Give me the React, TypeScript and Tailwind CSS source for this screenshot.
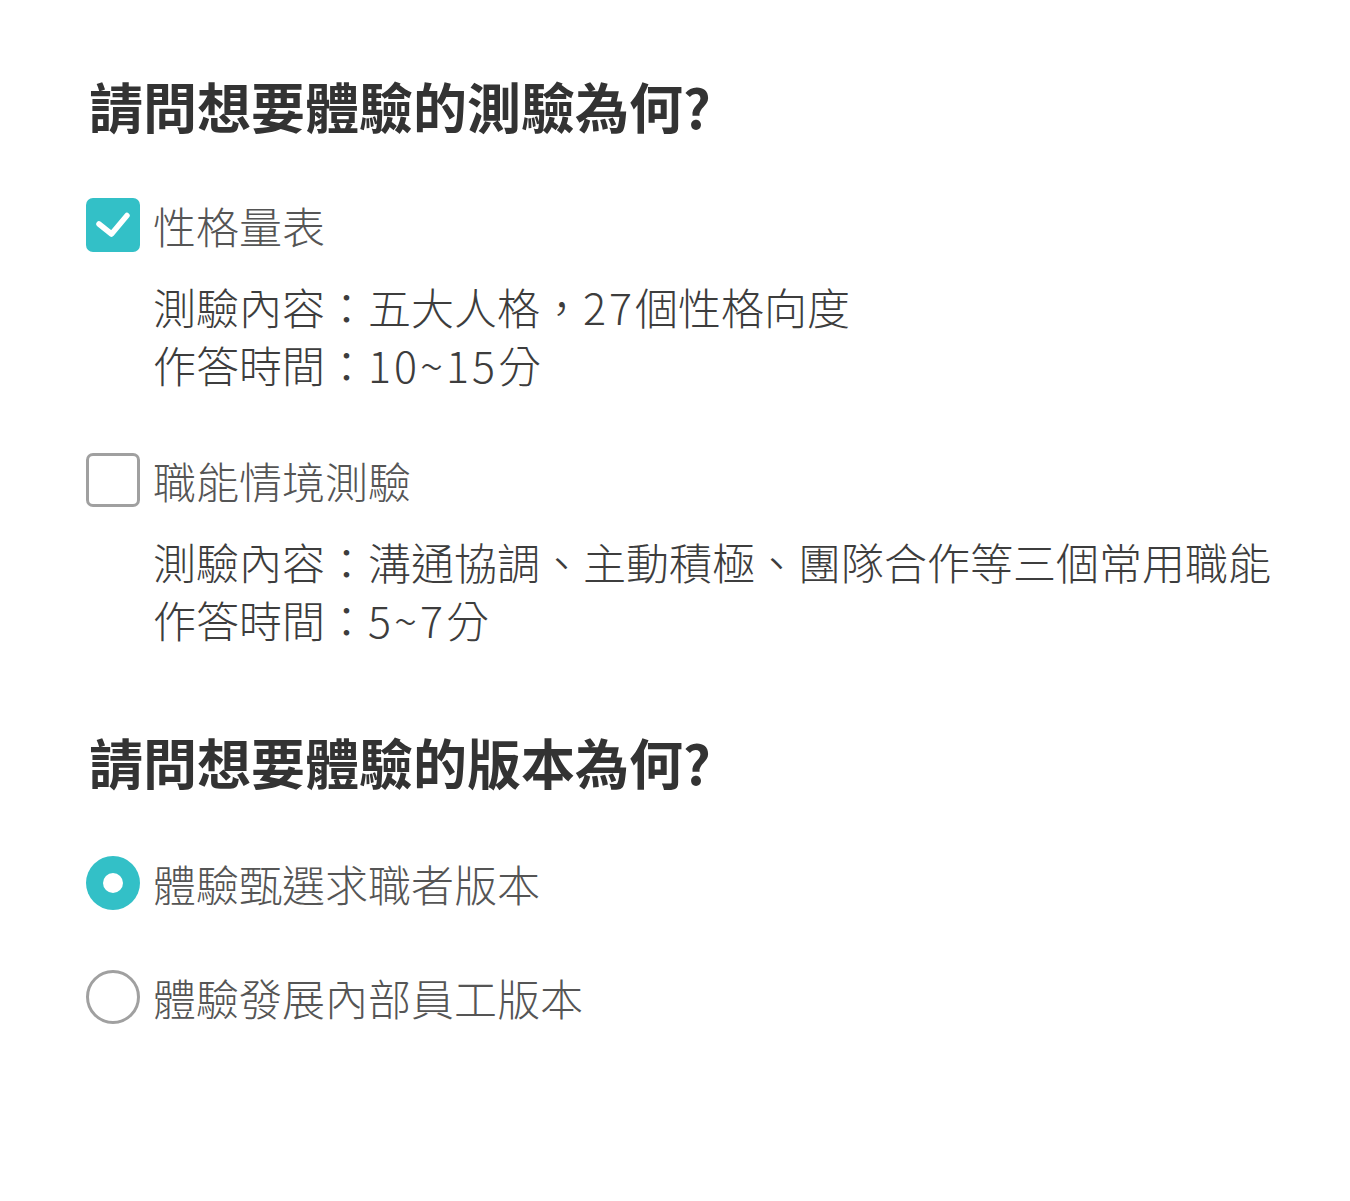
import { useState } from "react";

const FONT = { fontFamily: '"Noto Sans CJK TC", "Noto Sans", sans-serif' };

function CheckBox({ checked }: { checked: boolean }) {
  return checked ? (
    <span className="block h-[54px] w-[54px] shrink-0 rounded-[7px] bg-[#33c0c7]">
      <svg viewBox="0 0 54 54" className="h-[54px] w-[54px]" fill="none">
        <path
          d="M13 26l12.5 10L41 17.5"
          stroke="white"
          strokeWidth="5.5"
          strokeLinecap="round"
          strokeLinejoin="round"
        />
      </svg>
    </span>
  ) : (
    <span className="block h-[54px] w-[54px] shrink-0 rounded-[7px] border-[3px] border-[#a0a0a0] bg-white" />
  );
}

function Radio({ checked }: { checked: boolean }) {
  return checked ? (
    <span className="flex h-[54px] w-[54px] shrink-0 items-center justify-center rounded-full bg-[#33c0c7]">
      <span className="block h-[20px] w-[20px] rounded-full bg-white" />
    </span>
  ) : (
    <span className="block h-[54px] w-[54px] shrink-0 rounded-full border-[3px] border-[#a0a0a0] bg-white" />
  );
}

// digits in the reference sit a little wider than the CJK font's own
const Num = ({ children }: { children: string }) => (
  <span className="tracking-[3px]">{children}</span>
);

const tests = [
  {
    label: "性格量表",
    content: (
      <>
        測驗內容：五大人格，<Num>27</Num>個性格向度
      </>
    ),
    time: (
      <>
        作答時間：<Num>10~15</Num>分
      </>
    ),
  },
  {
    label: "職能情境測驗",
    content: <>測驗內容：溝通協調、主動積極、團隊合作等三個常用職能</>,
    time: (
      <>
        作答時間：<Num>5~7</Num>分
      </>
    ),
  },
];

const versions = ["體驗甄選求職者版本", "體驗發展內部員工版本"];

export default function App() {
  const [picked, setPicked] = useState<boolean[]>([true, false]);
  const [version, setVersion] = useState(0);

  return (
    <div
      lang="zh-TW"
      className="min-h-[1201px] w-full bg-white pl-[86px] pt-[71px] text-[#444]"
      style={FONT}
    >
      <h2 className="pl-[3px] text-[54px] font-bold leading-[70px] text-[#333]">
        請問想要體驗的測驗為何?
      </h2>

      <div className="mt-[57px] flex flex-col gap-[60px]">
        {tests.map((t, i) => (
          <div key={t.label}>
            <button
              type="button"
              className="flex items-center gap-[13px]"
              onClick={() => setPicked(picked.map((v, j) => (j === i ? !v : v)))}
            >
              <CheckBox checked={picked[i]} />
              <span className="text-[43px] font-light leading-[54px] text-[#555]">{t.label}</span>
            </button>
            <div className="mt-[25px] pl-[67px] text-[43px] font-light leading-[58px] text-[#3d3d3d]">
              <p>{t.content}</p>
              <p>{t.time}</p>
            </div>
          </div>
        ))}
      </div>

      <h2 className="mt-[79px] pl-[3px] text-[54px] font-bold leading-[70px] text-[#333]">
        請問想要體驗的版本為何?
      </h2>

      <div className="mt-[59px] flex flex-col gap-[60px]">
        {versions.map((v, i) => (
          <button
            key={v}
            type="button"
            className="flex items-center gap-[13px]"
            onClick={() => setVersion(i)}
          >
            <Radio checked={version === i} />
            <span className="text-[43px] font-light leading-[54px] text-[#555]">{v}</span>
          </button>
        ))}
      </div>
    </div>
  );
}
